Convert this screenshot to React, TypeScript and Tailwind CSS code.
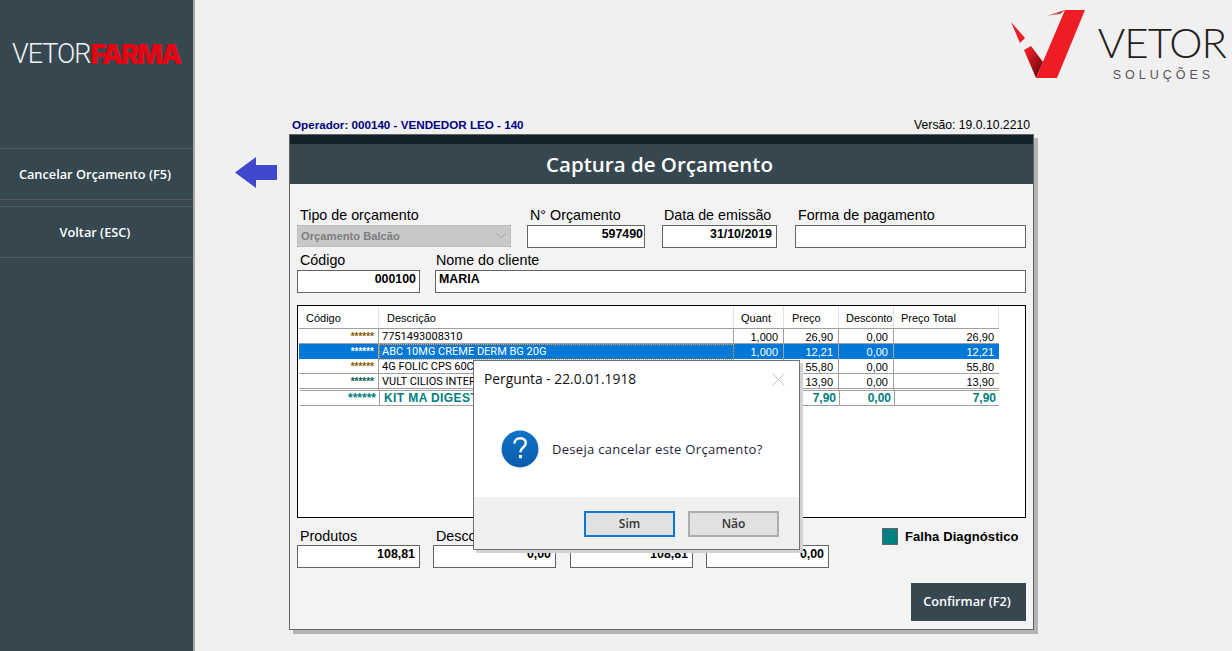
import type { ReactNode } from "react"

const items = [
  { stars: "brown", desc: "7751493008310", qty: "1,000", price: "26,90", disc: "0,00", total: "26,90" },
  { stars: "white", desc: "ABC 10MG CREME DERM BG 20G", qty: "1,000", price: "12,21", disc: "0,00", total: "12,21", selected: true },
  { stars: "brown", desc: "4G FOLIC CPS 60CAP", qty: "1,000", price: "55,80", disc: "0,00", total: "55,80" },
  { stars: "teal", desc: "VULT CILIOS INTER", qty: "1,000", price: "13,90", disc: "0,00", total: "13,90" },
]

const gridCols = "grid w-[700px] grid-cols-[80px_355px_50px_55px_55px_105px]"

export default function App() {
  return (
    <div className="relative flex h-[651px] w-[1232px] overflow-hidden bg-[#f0f0f0] font-['Liberation_Sans',sans-serif] text-black">
      <Sidebar />
      <main className="flex-1">
        <header className="flex h-[116px] justify-end pr-[6px] pt-[10px]">
          <VetorLogo />
        </header>
        <div className="ml-[94px] w-[745px]">
          <div className="flex h-[18px] items-center justify-between pl-[3px] pr-[4px]">
            <span className="text-[11.65px] font-bold text-[#000080]">Operador: 000140 - VENDEDOR LEO - 140</span>
            <span className="text-[12.2px]">Versão: 19.0.10.2210</span>
          </div>
          <Window />
        </div>
      </main>

      <svg className="absolute left-[235px] top-[157px]" width="42" height="31" viewBox="0 0 42 31">
        <path d="M0 15.5 21 0v8h21v15H21v8z" fill="#3f48cc" />
      </svg>

      <Dialog />
    </div>
  )
}

function Sidebar() {
  return (
    <aside className="flex w-[195px] flex-col border-r-2 border-[#a8a8a8] bg-[#37474f] font-['Open_Sans',sans-serif] text-[12.75px] font-semibold text-white">
      <div className="h-[148px] pl-[12px] pt-[39px]">
        <div className="flex h-[30px] items-center text-[27px] leading-none">
          <span className="font-['Roboto',sans-serif] font-light tracking-[-1px] text-[#f2f2f2]">VETOR</span>
          <span className="font-['Inter',sans-serif] font-black tracking-[-2.1px] text-[#e30613]">FARMA</span>
        </div>
      </div>
      <MenuItem>Cancelar Orçamento (F5)</MenuItem>
      <div className="h-[6px]" />
      <MenuItem>Voltar (ESC)</MenuItem>
    </aside>
  )
}

function MenuItem({ children }: { children: ReactNode }) {
  return (
    <button
      type="button"
      className="flex h-[52px] w-full items-center justify-center border-y border-[#56595c] pr-[3px] pt-[1px]"
    >
      {children}
    </button>
  )
}

function VetorLogo() {
  return (
    <div className="flex">
      <svg width="78" height="70" viewBox="0 0 78 70" className="mr-[12px]">
        <defs>
          <linearGradient id="fold" x1="0" y1="0" x2="1" y2="1">
            <stop offset="0.15" stopColor="#ee1c25" />
            <stop offset="0.85" stopColor="#6e0a0e" />
          </linearGradient>
          <linearGradient id="sliver" x1="0" y1="0.5" x2="1" y2="0.5">
            <stop offset="0" stopColor="#f4a0a0" />
            <stop offset="1" stopColor="#a3141a" />
          </linearGradient>
        </defs>
        <path d="M3 12 17 28 12 33z" fill="#ee1c25" />
        <path d="M16 40 23 36 35 52 28 68z" fill="url(#fold)" />
        <path d="M28 68 57 0H77L49 68z" fill="#ee1c25" />
        <path d="M38 6 57 0 52 4z" fill="url(#sliver)" />
      </svg>
      <div className="flex flex-col items-center">
        <span className="mt-[10px] font-['Lato',sans-serif] text-[42px] leading-[44px] font-light tracking-[-1px] text-[#231f20]">VETOR</span>
        <span className="mt-[4px] pl-[3px] text-[12.5px] leading-[14px] tracking-[4px] text-[#555]">SOLUÇÕES</span>
      </div>
    </div>
  )
}

function Field({
  label,
  width,
  value,
  align = "right",
  labelClass = "pl-[3px] leading-[15px]",
  valueClass = "pr-[4px]",
}: {
  label?: string
  width: string
  value?: string
  align?: "left" | "right"
  labelClass?: string
  valueClass?: string
}) {
  return (
    <div className={`shrink-0 ${width}`}>
      <div className={`h-[17px] whitespace-nowrap text-[14.3px] ${labelClass}`}>{label}</div>
      <div
        className={`h-[23px] border border-[#646464] bg-white pt-[1px] text-[12.4px] leading-[14px] font-bold ${
          align === "right" ? "text-right" : "pl-[3px] text-left"
        } ${valueClass}`}
      >
        {value}
      </div>
    </div>
  )
}

function Window() {
  const lowLabel = "pl-[3px] leading-[17px]"
  return (
    <section className="flex h-[496px] flex-col border border-[#646464] bg-[#f3f3f3] shadow-[4px_4px_0_#b4b4b4]">
      <div className="h-[9px] bg-[#12212a]" />
      <h1 className="flex h-[40px] items-center justify-center bg-[#37474f] pr-[4px] font-['Open_Sans',sans-serif] text-[20.5px] font-semibold text-white">
        Captura de Orçamento
      </h1>
      <div className="flex flex-1 flex-col px-[7px] pt-[24px]">
        <div className="flex">
          <div className="w-[214px] shrink-0">
            <div className="h-[17px] pl-[3px] text-[14.3px] leading-[15px]">Tipo de orçamento</div>
            <div className="flex h-[22px] items-center justify-between border border-[#bdbdbd] bg-[#c8c8c8] pl-[3px] pr-[2px] text-[11.2px] font-bold text-[#7d7d7d]">
              Orçamento Balcão
              <svg width="12" height="8" viewBox="0 0 12 8" className="mr-[1px]">
                <path d="m1.5 1.5 4.5 4.5 4.5-4.5" fill="none" stroke="#a0a0a0" />
              </svg>
            </div>
          </div>
          <div className="ml-[16px]"><Field label="N° Orçamento" width="w-[118px]" value="597490" valueClass="pr-[1px]" /></div>
          <div className="ml-[17px]"><Field label="Data de emissão" width="w-[115px]" value="31/10/2019" labelClass="pl-[2px] leading-[15px]" /></div>
          <div className="ml-[18px]"><Field label="Forma de pagamento" width="w-[231px]" /></div>
        </div>
        <div className="mt-[5px] flex gap-[15px]">
          <Field label="Código" width="w-[123px]" value="000100" valueClass="pr-[3px]" />
          <Field label="Nome do cliente" width="w-[591px]" value="MARIA" align="left" labelClass="pl-[1px] leading-[15px]" />
        </div>

        <ItemsTable />

        <div className="mt-[10px] flex">
          <Field label="Produtos" width="w-[123px]" value="108,81" labelClass={lowLabel} />
          <div className="ml-[13px]"><Field label="Descontos" width="w-[123px]" value="0,00" labelClass={lowLabel} /></div>
          <div className="ml-[14px]"><Field width="w-[123px]" value="108,81" /></div>
          <div className="ml-[13px]"><Field width="w-[123px]" value="0,00" /></div>
          <div className="ml-[53px] flex h-[17px] shrink-0 items-center gap-[7px] whitespace-nowrap text-[13px] font-bold tracking-[0.1px]">
            <span className="h-[17px] w-[16px] border border-[#646464] bg-[#008080]" />
            Falha Diagnóstico
          </div>
        </div>

        <div className="mt-[15px] flex justify-end">
          <button
            type="button"
            className="h-[38px] w-[115px] bg-[#37474f] pr-[3px] font-['Open_Sans',sans-serif] text-[12.7px] font-semibold text-white"
          >
            Confirmar (F2)
          </button>
        </div>
      </div>
    </section>
  )
}

function ItemsTable() {
  return (
    <div className="mt-[12px] h-[213px] w-[729px] border border-black bg-white pl-[1px] text-[11px] leading-[14px]">
      <div className={`${gridCols} h-[23px] border-b border-[#a0a0a0] pt-[5px]`}>
        <HeadCell className="pl-[7px]">Código</HeadCell>
        <HeadCell className="pl-[8px]">Descrição</HeadCell>
        <HeadCell className="pl-[7px]">Quant</HeadCell>
        <HeadCell className="pl-[8px]">Preço</HeadCell>
        <HeadCell className="pl-[7px]">Desconto</HeadCell>
        <HeadCell className="pl-[7px]">Preço Total</HeadCell>
      </div>
      {items.map((item) => (
        <ItemRow key={item.desc} {...item} />
      ))}
      <div className="ml-[1px] mt-[1px] grid h-[16px] w-[699px] grid-cols-[79px_355px_50px_55px_55px_105px] border-y border-[#a0a0a0] text-[12px] leading-[15px] font-bold text-[#008080]">
        <div className="pr-[3px] text-right">******</div>
        <div className="whitespace-nowrap border-l border-[#a0a0a0] pl-[4px] tracking-[0.4px]">KIT MA DIGEST</div>
        <div className="border-l border-[#a0a0a0]" />
        <div className="border-l border-[#a0a0a0] pr-[3px] text-right">7,90</div>
        <div className="border-l border-[#a0a0a0] pr-[3px] text-right">0,00</div>
        <div className="border-l border-[#a0a0a0] pr-[3px] text-right">7,90</div>
      </div>
    </div>
  )
}

function HeadCell({ className, children }: { className: string; children: ReactNode }) {
  return <div className={`-mt-[5px] h-[22px] border-r border-[#e3e3e3] pt-[5px] ${className}`}>{children}</div>
}

function ItemRow({
  stars,
  desc,
  qty,
  price,
  disc,
  total,
  selected,
}: {
  stars: string
  desc: string
  qty: string
  price: string
  disc: string
  total: string
  selected?: boolean
}) {
  const starColor = stars === "brown" ? "text-[#8a5a00]" : stars === "teal" ? "text-[#0a5a5a]" : "text-white"
  const cell = "border-r border-[#a0a0a0] pr-[5px] text-right"
  return (
    <div
      className={`${gridCols} h-[15px] border-b leading-[16px] ${
        selected ? "border-[#0078d7] bg-[#0078d7] text-white" : "border-[#a0a0a0]"
      }`}
    >
      <div className={`border-r border-[#a0a0a0] pr-[4px] text-right text-[10px] font-bold ${starColor}`}>******</div>
      <div
        className={`whitespace-nowrap font-['Roboto',sans-serif] ${
          selected ? "border border-dotted border-[#f0a040] pl-[2px] leading-[14px]" : "border-r border-[#a0a0a0] pl-[3px]"
        }`}
      >
        {desc}
      </div>
      <div className={cell}>{qty}</div>
      <div className={cell}>{price}</div>
      <div className={cell}>{disc}</div>
      <div className="pr-[5px] text-right">{total}</div>
    </div>
  )
}

function Dialog() {
  return (
    <div
      role="dialog"
      className="absolute left-[473px] top-[360px] flex h-[190px] w-[327px] flex-col border border-[#707070] bg-white font-['Open_Sans',sans-serif] shadow-[3px_3px_0_#d2d2d2]"
    >
      <div className="flex h-[37px] items-center justify-between pl-[10px] pr-[14px] text-[13.8px] text-[#111]">
        Pergunta - 22.0.01.1918
        <svg width="13" height="13" viewBox="0 0 13 13">
          <path d="m.5.5 12 12m0-12-12 12" stroke="#c4c4c4" fill="none" />
        </svg>
      </div>
      <div className="flex h-[99px] items-center gap-[13px] pl-[27px] pt-[3px] text-[13px] tracking-[0.3px] text-[#1f1f3a]">
        <QuestionIcon />
        <span className="pt-[1px]">Deseja cancelar este Orçamento?</span>
      </div>
      <div className="flex flex-1 items-start justify-end gap-[13px] bg-[#f0f0f0] pr-[20px] pt-[14px] text-[12px] font-semibold text-[#333]">
        <button type="button" className="h-[26px] w-[91px] border-2 border-[#0078d7] bg-[#e1e1e1]">Sim</button>
        <button type="button" className="h-[26px] w-[91px] border-2 border-[#adadad] bg-[#e1e1e1]">Não</button>
      </div>
    </div>
  )
}

function QuestionIcon() {
  return (
    <svg width="38" height="38" viewBox="0 0 38 38">
      <defs>
        <linearGradient id="qblue" x1="0" y1="0" x2="0" y2="1">
          <stop offset="0" stopColor="#0f74c8" />
          <stop offset="1" stopColor="#0a5cab" />
        </linearGradient>
      </defs>
      <circle cx="19" cy="19" r="18.5" fill="url(#qblue)" />
      <path d="M13.5 13.5c0-3.4 2.5-5.3 5.7-5.3 3.3 0 5.6 1.9 5.6 4.8 0 4.4-5.5 4.6-5.5 9.2" fill="none" stroke="#fff" strokeWidth="2.4" />
      <rect x="17.9" y="25" width="3" height="3.2" fill="#fff" />
    </svg>
  )
}
